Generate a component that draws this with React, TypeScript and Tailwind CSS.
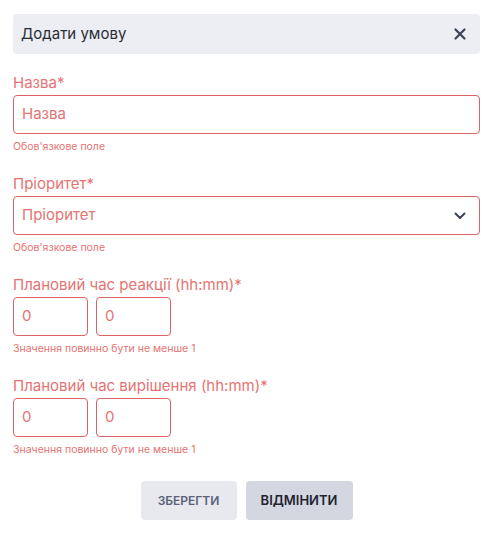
import React from 'react';

const font = { fontFamily: 'Inter, "Noto Sans", sans-serif' };

const Helper = ({ text }: { text: string }) => (
    <div className="text-[10.5px] leading-[12px] text-[#e57373] mt-[7px]">{text}</div>
);

const Label = ({ text }: { text: string }) => (
    <div className="text-[15px] leading-[18px] text-[#e57373] mb-[3px]">{text}</div>
);

const TimeInputs = () => (
    <div className="flex gap-2">
        <div className="w-[75px] h-[39px] border border-[#dc6464] rounded-[4px] flex items-center px-[8px] text-[15px] text-[#e57373]">0</div>
        <div className="w-[75px] h-[39px] border border-[#dc6464] rounded-[4px] flex items-center px-[8px] text-[15px] text-[#e57373]">0</div>
    </div>
);

const App: React.FC = () => {
    return (
        <div style={font} className="w-[493px] h-[538px] bg-white px-[13px] pt-[14px]">
            <div className="h-[40px] bg-[#eceef3] rounded-[4px] flex items-center justify-between px-[8px]">
                <span className="text-[15px] text-[#2a2d36]">Додати умову</span>
                <svg width="12" height="12" viewBox="0 0 12 12" className="mr-[6px]">
                    <path d="M1.5 1.5 L10.5 10.5 M10.5 1.5 L1.5 10.5" stroke="#3d4458" strokeWidth="2.2" strokeLinecap="round" />
                </svg>
            </div>

            <div className="mt-[20px]">
                <Label text="Назва*" />
                <div className="h-[39px] border border-[#dc6464] rounded-[4px] flex items-center px-[8px] text-[15px] text-[#e57373]">
                    Назва
                </div>
                <Helper text="Обов'язкове поле" />
            </div>

            <div className="mt-[22px]">
                <Label text="Пріоритет*" />
                <div className="h-[39px] border border-[#dc6464] rounded-[4px] flex items-center justify-between px-[8px] text-[15px] text-[#e57373]">
                    <span>Пріоритет</span>
                    <svg width="12" height="8" viewBox="0 0 12 8" className="mr-[5px]">
                        <path d="M1.5 1.5 L6 6 L10.5 1.5" stroke="#3d4458" strokeWidth="2" fill="none" strokeLinecap="round" strokeLinejoin="round" />
                    </svg>
                </div>
                <Helper text="Обов'язкове поле" />
            </div>

            <div className="mt-[22px]">
                <Label text="Плановий час реакції (hh:mm)*" />
                <TimeInputs />
                <Helper text="Значення повинно бути не менше 1" />
            </div>

            <div className="mt-[22px]">
                <Label text="Плановий час вирішення (hh:mm)*" />
                <TimeInputs />
                <Helper text="Значення повинно бути не менше 1" />
            </div>

            <div className="flex justify-center gap-[9px] mt-[25px]">
                <button className="w-[96px] h-[39px] rounded-[4px] bg-[#e8e9ef] text-[#5b6279] text-[12px] font-semibold">ЗБЕРЕГТИ</button>
                <button className="w-[107px] h-[39px] rounded-[4px] bg-[#d4d7e0] text-[#1f2330] text-[13px] font-semibold">ВІДМІНИТИ</button>
            </div>
        </div>
    );
};

export default App;
